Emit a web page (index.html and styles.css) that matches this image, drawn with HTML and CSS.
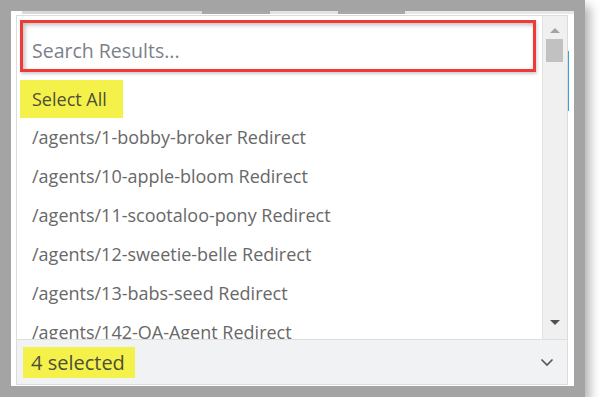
FILE: index.html
```html
<!DOCTYPE html>
<html lang="en">
<head>
  <meta charset="UTF-8">
  <title>Search Results</title>
  <link rel="stylesheet" href="styles.css">
</head>
<body>
  <div class="frame">
    <div class="peek"></div>
    <div class="panel">
      <div class="body">
        <div class="results">
          <div class="search"><span class="placeholder">Search Results...</span></div>
          <div class="select-all"><span>Select All</span></div>
          <ul class="list">
            <li>/agents/1-bobby-broker Redirect</li>
            <li>/agents/10-apple-bloom Redirect</li>
            <li>/agents/11-scootaloo-pony Redirect</li>
            <li>/agents/12-sweetie-belle Redirect</li>
            <li>/agents/13-babs-seed Redirect</li>
            <li>/agents/142-QA-Agent Redirect</li>
          </ul>
        </div>
        <div class="scrollbar">
          <span class="arrow up"></span>
          <span class="thumb"></span>
          <span class="fill"></span>
          <span class="arrow down"></span>
        </div>
      </div>
      <div class="footer">
        <span class="count">4 selected</span>
        <svg class="chevron" width="14" height="9" viewBox="0 0 14 9">
          <path d="M1.5 1.5 L7 7 L12.5 1.5" fill="none" stroke="#555" stroke-width="1.6"/>
        </svg>
      </div>
    </div>
    <span class="edge"></span>
  </div>
</body>
</html>
```

FILE: styles.css
```css
body {
  margin: 0;
  background: #fff;
  font-family: "Open Sans", "Liberation Sans", sans-serif;
}

.frame {
  position: relative;
  width: 585px;
  height: 397px;
  box-sizing: border-box;
  border: 11px solid #a4a4a4;
  background: #fff;
  padding: 4px 6px 1px 5px;
  box-shadow: 5px 6px 10px rgba(0, 0, 0, 0.3);
}

/* bit of the page behind, showing along the top */
.peek {
  position: absolute;
  left: 0;
  right: 0;
  top: 0;
  height: 3px;
  background: linear-gradient(90deg, #fff 0 2%, #d9d9d9 2% 34%, #a8a8a8 34% 46%, #e3e3e3 46% 58%, #a8a8a8 58% 70%, #e8e8e8 70% 100%);
}

.edge {
  position: absolute;
  right: 5px;
  top: 40px;
  width: 1px;
  height: 60px;
  background: #3aa0dc;
}

.panel {
  height: 100%;
  box-sizing: border-box;
  border: 1px solid #dcdcdc;
  display: flex;
  flex-direction: column;
}

.body {
  flex: 1;
  min-height: 0;
  display: flex;
}

.results {
  flex: 1;
  min-width: 0;
  overflow: hidden;
}

.search {
  margin: 4px 6px 0 3px;
  height: 52px;
  box-sizing: border-box;
  border: 3px solid #f03a3a;
  box-shadow: inset 2px 2px 4px rgba(0, 0, 0, 0.25), 1px 2px 3px rgba(0, 0, 0, 0.2);
  display: flex;
  align-items: center;
  padding: 9px 0 0 9px;
}

.placeholder {
  font-size: 19.5px;
  color: #7b818a;
}

.select-all {
  margin: 8px 0 0 3px;
  width: 103px;
  height: 38px;
  background: #f4f24a;
  display: flex;
  align-items: center;
  padding-left: 12px;
  box-sizing: border-box;
  font-size: 18px;
  color: #4e4e3a;
}

.list {
  list-style: none;
  margin: 0;
  padding: 0;
}

.list li {
  height: 39px;
  line-height: 39px;
  padding-left: 15px;
  font-size: 18px;
  color: #686868;
  white-space: nowrap;
}

.scrollbar {
  width: 24px;
  background: #f0f0f0;
  border-left: 1px solid #e2e2e2;
  display: flex;
  flex-direction: column;
  align-items: center;
}

.arrow {
  width: 0;
  height: 0;
  border-left: 5px solid transparent;
  border-right: 5px solid transparent;
}

.arrow.up {
  margin-top: 12px;
  border-bottom: 5px solid #a3a3a3;
}

.arrow.down {
  margin-bottom: 14px;
  border-top: 5px solid #505050;
}

.thumb {
  margin: 6px 2px 0 0;
  width: 17px;
  height: 23px;
  background: #c1c1c1;
}

.fill {
  flex: 1;
}

.footer {
  height: 45px;
  box-sizing: border-box;
  border-top: 1px solid #dedede;
  background: #f1f2f4;
  display: flex;
  align-items: center;
  justify-content: space-between;
  padding: 0 13px 0 6px;
}

.count {
  background: #f4f24a;
  height: 31px;
  line-height: 31px;
  padding: 0 10px 0 8px;
  font-size: 20px;
  color: #4e4e3a;
}

.chevron {
  display: block;
}
```
